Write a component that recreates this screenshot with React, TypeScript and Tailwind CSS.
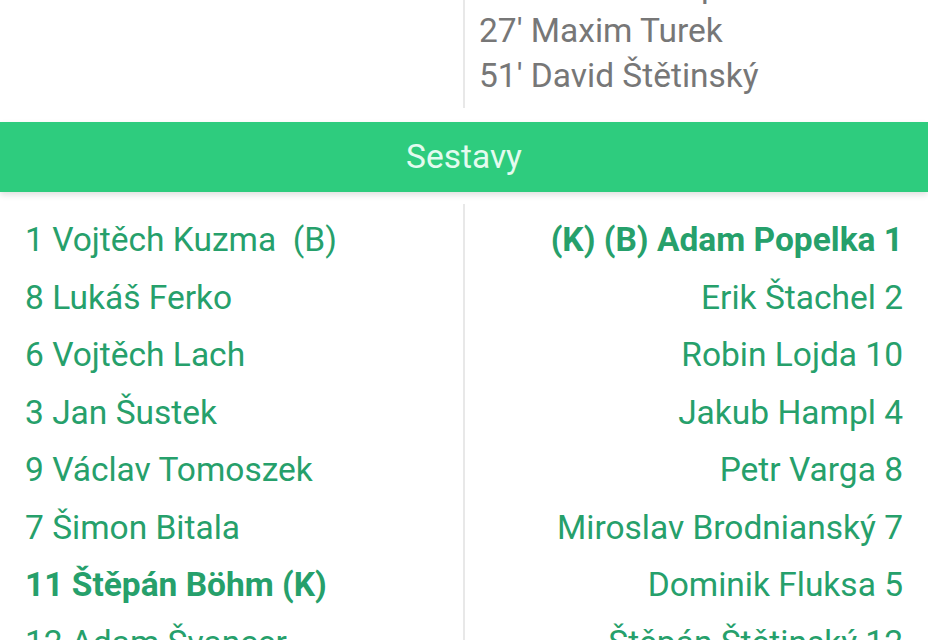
const homeLineup: { text: string; bold?: boolean }[] = [
  { text: "1 Vojtěch Kuzma  (B)" },
  { text: "8 Lukáš Ferko" },
  { text: "6 Vojtěch Lach" },
  { text: "3 Jan Šustek" },
  { text: "9 Václav Tomoszek" },
  { text: "7 Šimon Bitala" },
  { text: "11 Štěpán Böhm (K)", bold: true },
  { text: "12 Adam Švancer" },
];

const awayLineup: { text: string; bold?: boolean }[] = [
  { text: "(K) (B) Adam Popelka 1", bold: true },
  { text: "Erik Štachel 2" },
  { text: "Robin Lojda 10" },
  { text: "Jakub Hampl 4" },
  { text: "Petr Varga 8" },
  { text: "Miroslav Brodnianský 7" },
  { text: "Dominik Fluksa 5" },
  { text: "Štěpán Štětinský 12" },
];

const awayGoals = ["14' Dominik Kopal", "27' Maxim Turek", "51' David Štětinský"];

export default function App() {
  return (
    <div
      className="w-[928px] h-[640px] overflow-hidden bg-white"
      style={{ fontFamily: "Roboto, 'Noto Sans', sans-serif" }}
    >
      {/* goals */}
      <div className="flex -mt-[37px]">
        <div className="w-[463px]" />
        <div className="flex-1 border-l-2 border-[#e8e8e8] pl-[14px] pb-[10px]">
          {awayGoals.map((g) => (
            <div key={g} className="text-[33.5px] leading-[45px] text-[#777777] whitespace-nowrap">
              {g}
            </div>
          ))}
        </div>
      </div>

      {/* section header */}
      <div className="mt-[14px] h-[70px] bg-[#2ecc7e] flex items-center justify-center shadow-[0_3px_6px_rgba(0,0,0,0.12)]">
        <span className="text-[33.5px] text-[#e3fbef]">Sestavy</span>
      </div>

      {/* lineups */}
      <div className="flex mt-[12px]">
        <div className="w-[463px] pl-[25px] pt-[7px]">
          {homeLineup.map((p) => (
            <div
              key={p.text}
              className={`text-[33.5px] leading-[57.5px] whitespace-pre text-[#26a06b] ${
                p.bold ? "font-bold" : ""
              }`}
            >
              {p.text}
            </div>
          ))}
        </div>
        <div className="flex-1 border-l-2 border-[#e8e8e8] pr-[25px] pt-[7px] text-right">
          {awayLineup.map((p) => (
            <div
              key={p.text}
              className={`text-[33.5px] leading-[57.5px] whitespace-nowrap text-[#26a06b] ${
                p.bold ? "font-bold" : ""
              }`}
            >
              {p.text}
            </div>
          ))}
        </div>
      </div>
    </div>
  );
}
